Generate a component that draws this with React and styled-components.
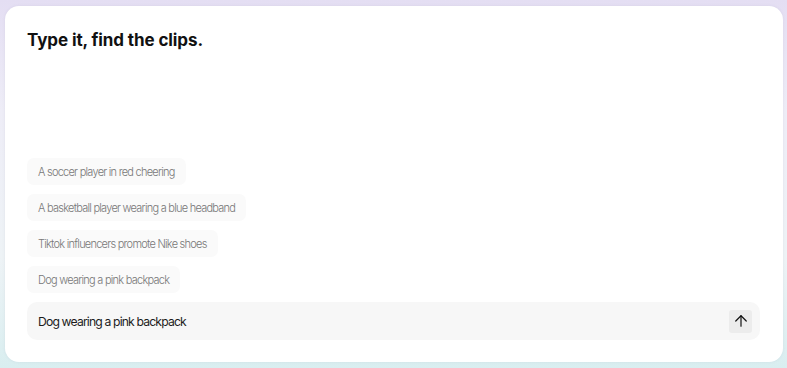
import React, { useState } from 'react';
import styled, { createGlobalStyle } from 'styled-components';
import { ArrowUp } from 'lucide-react';

const GlobalStyle = createGlobalStyle`
  html, body {
    margin: 0;
    padding: 0;
  }
  body {
    font-family: "Inter", "Noto Sans", sans-serif;
    background: linear-gradient(180deg, #e4def3 0%, #eeedf7 30%, #eef3f6 70%, #d9eef0 100%);
    min-height: 368px;
  }
`;

const Page = styled.div`
  box-sizing: border-box;
  height: 368px;
  padding: 6px 4px 6px 5px;
  display: flex;
`;

const Card = styled.div`
  box-sizing: border-box;
  flex: 1;
  background: #ffffff;
  border-radius: 14px;
  box-shadow: 0 0 3px rgba(120, 120, 160, 0.12);
  padding: 22px 23px 22px 22px;
  display: flex;
  flex-direction: column;
`;

const Title = styled.h1`
  margin: 0;
  font-size: 17px;
  line-height: 24px;
  font-weight: 700;
  color: #111111;
  letter-spacing: -0.1px;
`;

const Suggestions = styled.div`
  margin-top: auto;
  display: flex;
  flex-direction: column;
  align-items: flex-start;
  gap: 9px;
`;

const Chip = styled.button`
  height: 27px;
  padding: 0 11px;
  border: none;
  border-radius: 7px;
  background: #fafafa;
  color: #777777;
  font-family: inherit;
  font-size: 11px;
  font-weight: 300;
  letter-spacing: -0.75px;
  cursor: pointer;
`;

const InputBar = styled.div`
  margin-top: 9px;
  height: 38px;
  box-sizing: border-box;
  border-radius: 10px;
  background: #f7f7f7;
  display: flex;
  align-items: center;
  padding: 0 8px 0 11px;
`;

const Input = styled.input`
  flex: 1;
  border: none;
  background: transparent;
  outline: none;
  font-family: inherit;
  font-size: 12.2px;
  letter-spacing: -0.85px;
  color: #1c1c1c;
  padding: 0;
`;

const Send = styled.button`
  width: 23px;
  height: 23px;
  border: none;
  border-radius: 3px;
  background: #ececec;
  color: #111;
  display: flex;
  align-items: center;
  justify-content: center;
  padding: 0;
  cursor: pointer;
`;

const prompts = [
  'A soccer player in red cheering',
  'A basketball player wearing a blue headband',
  'Tiktok influencers promote Nike shoes',
  'Dog wearing a pink backpack',
];

const App = () => {
  const [query, setQuery] = useState('Dog wearing a pink backpack');
  return (
    <>
      <GlobalStyle />
      <Page>
        <Card>
          <Title>Type it, find the clips.</Title>
          <Suggestions>
            {prompts.map(p => (
              <Chip key={p} onClick={() => setQuery(p)}>{p}</Chip>
            ))}
          </Suggestions>
          <InputBar>
            <Input value={query} onChange={e => setQuery(e.target.value)} />
            <Send aria-label="Search">
              <ArrowUp size={18} strokeWidth={1.6} />
            </Send>
          </InputBar>
        </Card>
      </Page>
    </>
  );
};

export default App;
